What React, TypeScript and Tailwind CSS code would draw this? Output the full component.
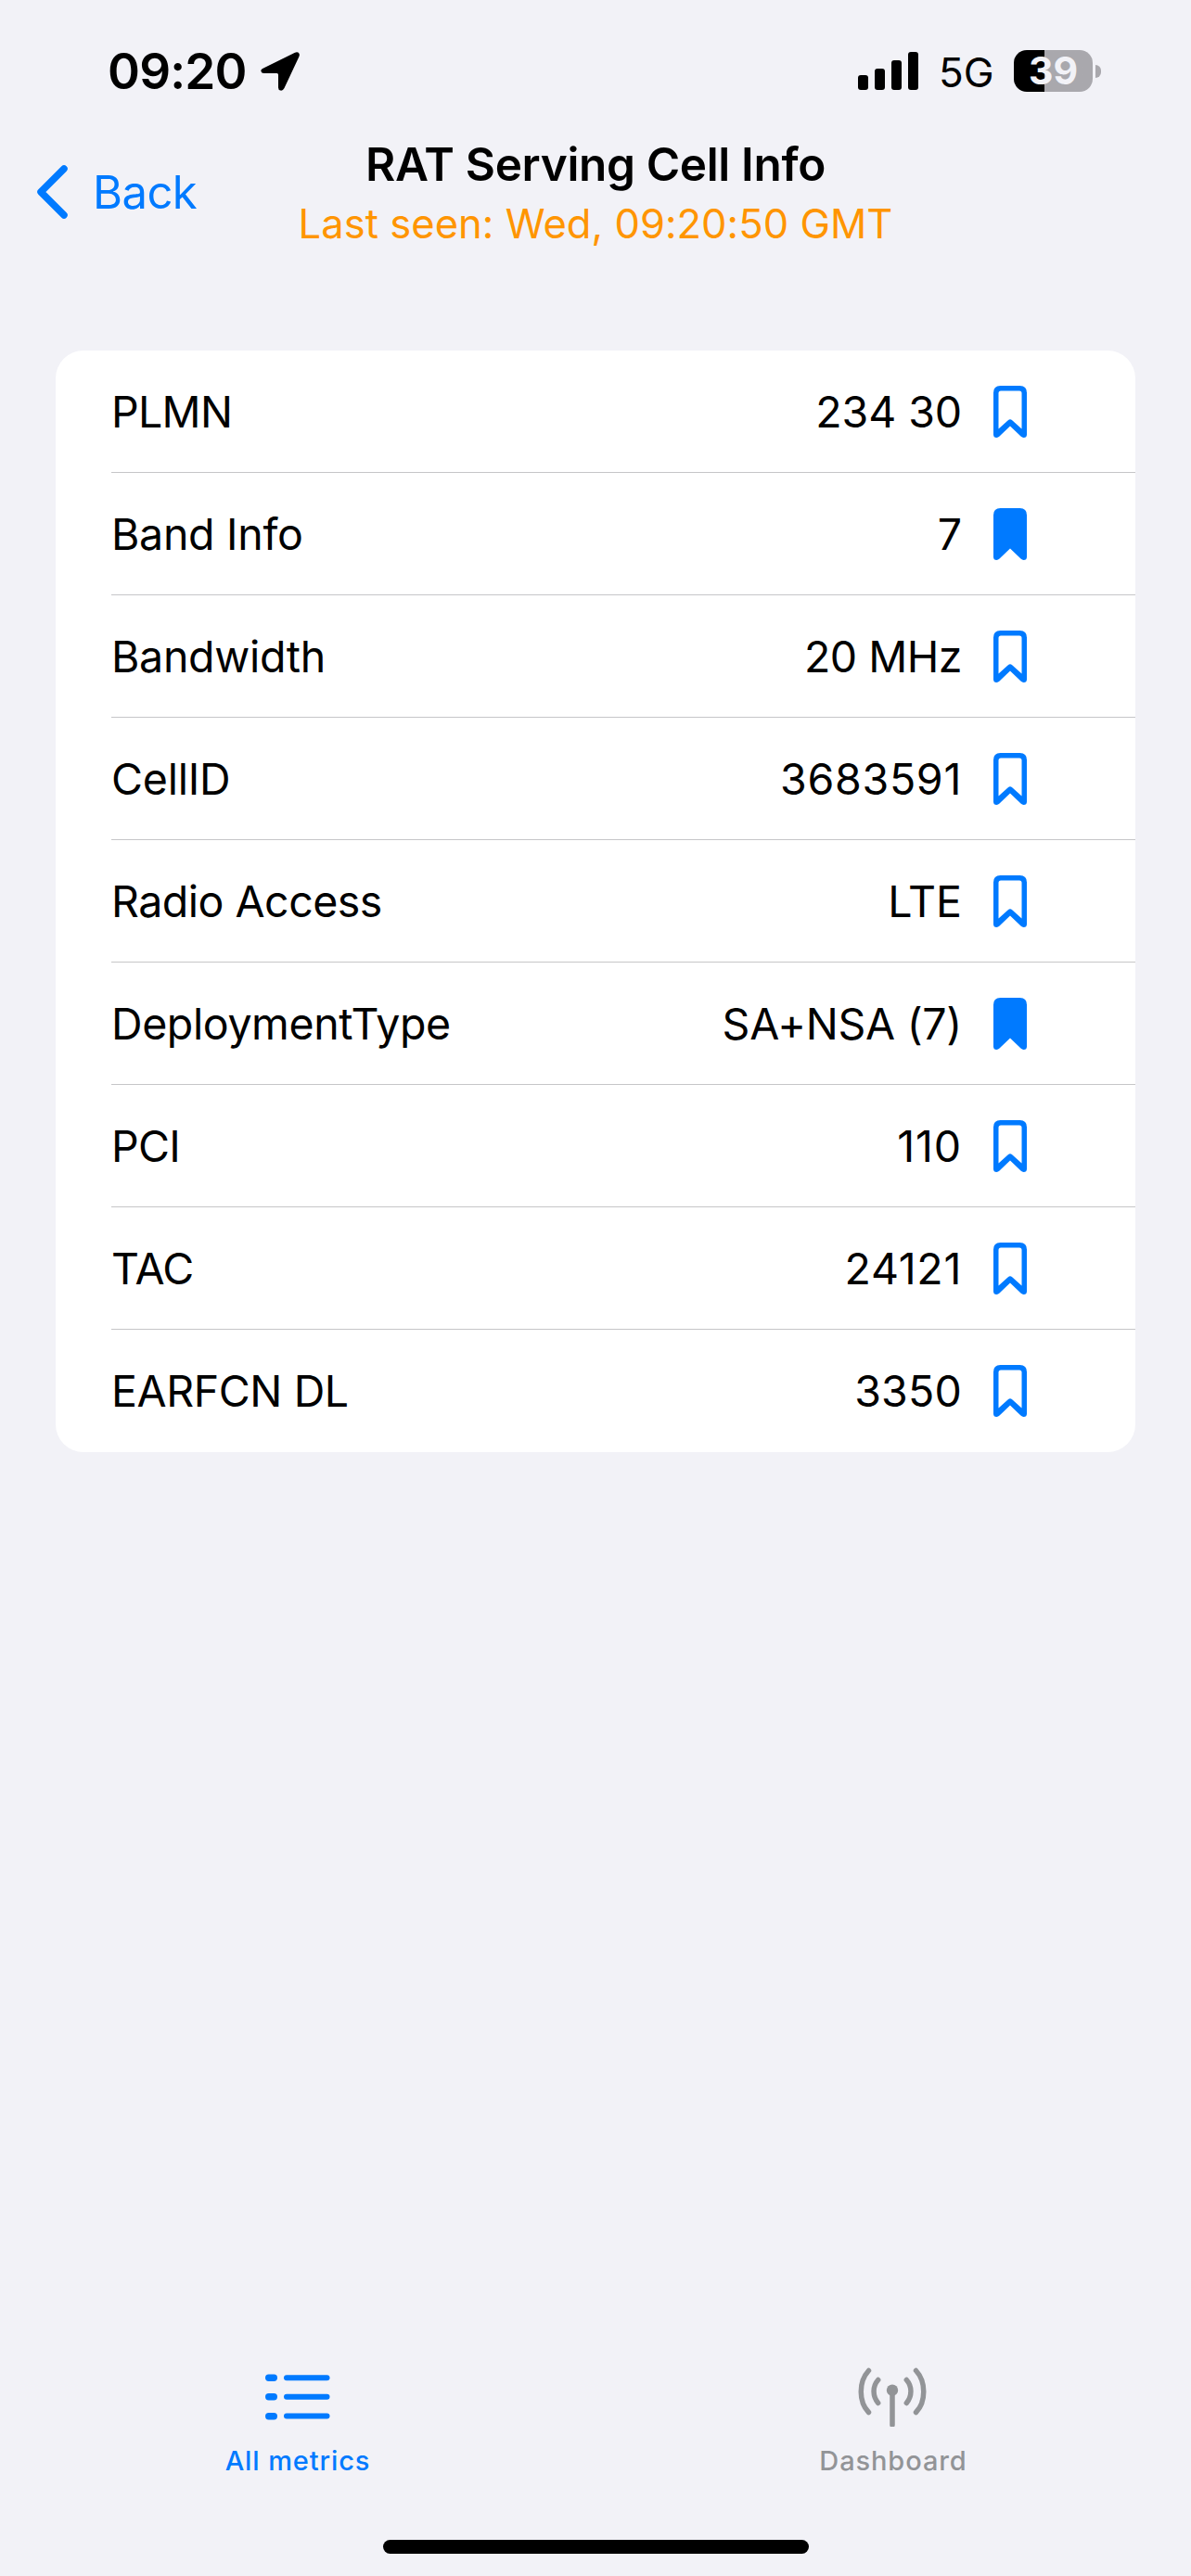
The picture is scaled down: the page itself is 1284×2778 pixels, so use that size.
import React from 'react';

type Metric = {
  label: string
  value: string
  saved: boolean
  labelSpacing: string
  valueSpacing: string
}

const metrics: Metric[] = [
  { label: 'PLMN', value: '234 30', saved: false, labelSpacing: 'tracking-[-0.7px]', valueSpacing: 'tracking-[-0.1px]' },
  { label: 'Band Info', value: '7', saved: true, labelSpacing: 'tracking-[-0.3px]', valueSpacing: '' },
  { label: 'Bandwidth', value: '20 MHz', saved: false, labelSpacing: 'tracking-[-0.3px]', valueSpacing: 'tracking-[-0.5px]' },
  { label: 'CellID', value: '3683591', saved: false, labelSpacing: 'tracking-[-0.2px]', valueSpacing: 'tracking-[0.7px]' },
  { label: 'Radio Access', value: 'LTE', saved: false, labelSpacing: 'tracking-[-0.5px]', valueSpacing: '' },
  { label: 'DeploymentType', value: 'SA+NSA (7)', saved: true, labelSpacing: 'tracking-[-0.4px]', valueSpacing: 'tracking-[-0.3px]' },
  { label: 'PCI', value: '110', saved: false, labelSpacing: 'tracking-[-0.7px]', valueSpacing: 'tracking-[0.9px]' },
  { label: 'TAC', value: '24121', saved: false, labelSpacing: 'tracking-[-0.6px]', valueSpacing: 'tracking-[0.7px]' },
  { label: 'EARFCN DL', value: '3350', saved: false, labelSpacing: 'tracking-[-0.4px]', valueSpacing: 'tracking-[0.2px]' },
];

const Bookmark = ({ saved }: { saved: boolean }) => (
  <svg viewBox="0 0 36 56" className="mt-px h-14 w-9 shrink-0 text-[#007aff]">
    {saved ? (
      <path
        fill="currentColor"
        d="M0 7.5Q0 0 7.500 0H28.500Q36 0 36 7.500V52.500Q36 56 32.500 56Q31 56 29.500 54.600L18 43.500L6.500 54.600Q5 56 3.500 56Q0 56 0 52.500Z"
      />
    ) : (
      <path
        fill="currentColor"
        fillRule="evenodd"
        d="M0 7.5Q0 0 7.500 0H28.500Q36 0 36 7.500V52.500Q36 56 32.500 56Q31 56 29.500 54.600L18 43.500L6.500 54.600Q5 56 3.500 56Q0 56 0 52.500ZM5.500 8V46.500L15.800 37.200Q18 35.300 20.200 37.200L30.500 46.500V8Q30.500 5.500 28 5.500H8Q5.500 5.500 5.500 8Z"
      />
    )}
  </svg>
);

const Row = ({ label, value, saved, labelSpacing, valueSpacing }: Metric) => (
  <li className="group h-[132px] pl-[60px]">
    <div className="flex h-full items-center border-b border-[#c6c6c8] pr-[117px] group-last:border-transparent">
      <span className={`flex-1 pt-[2px] ${labelSpacing}`}>{label}</span>
      <span className={`mr-[34px] pt-[2px] ${valueSpacing}`}>{value}</span>
      <Bookmark saved={saved} />
    </div>
  </li>
);

const StatusBar = () => (
  <div className="flex h-[153px] items-center justify-between pl-[116px] pr-[97px]">
    <div className="flex items-center gap-[15px]">
      <span className="pt-[2px] text-[53px] font-semibold leading-none tracking-[-0.8px]">09:20</span>
      <svg viewBox="0 0 42 42" className="size-[42px]">
        <path d="M3 17.500L37 .8Q40 -.5 41.500 1.800Q42.300 3.200 41.200 5.500L25.500 39Q24 42 21.500 41.600Q19 41.200 19 38.500V24.500Q19 23 17.500 23H3.500Q.8 23 .3 20.500Q0 18.800 3 17.500Z" />
      </svg>
    </div>
    <div className="flex items-center">
      <svg viewBox="0 0 65 41" className="h-[41px] w-[65px]">
        <rect x="0" y="25" width="11" height="16" rx="3" />
        <rect x="18" y="18" width="11" height="23" rx="3" />
        <rect x="36" y="9" width="11" height="32" rx="3" />
        <rect x="54" y="0" width="11" height="41" rx="3" />
      </svg>
      <span className="ml-[22px] mt-[2px] w-[59px] text-[44px] leading-none">5G</span>
      <div className="ml-[22px] flex h-[45px] w-[85px] items-center justify-center rounded-[14px] bg-linear-to-r from-black from-[39%] to-[#a9a8ad] to-[39%] text-[41px] font-bold leading-none text-[#f2f2f7]">
        39
      </div>
      <div className="ml-[3px] h-[14px] w-[6px] rounded-r-full bg-[#a9a8ad]" />
    </div>
  </div>
);

const App = () => {
  return (
    <div className="flex h-[2778px] w-[1284px] flex-col bg-[#f2f2f7] font-[Inter,sans-serif] text-black">
      <StatusBar />

      <header className="grid h-[225px] grid-cols-[320px_1fr_320px]">
        <button type="button" className="flex h-[108px] items-center gap-[27px] pl-10 text-[49px] leading-none tracking-[-0.6px] text-[#007aff]">
          <svg viewBox="0 0 33 58" className="h-[58px] w-[33px]" fill="none" stroke="currentColor" strokeWidth="7.500" strokeLinecap="round" strokeLinejoin="round">
            <path d="M29 4L4 29L29 54" />
          </svg>
          Back
        </button>
        <div className="flex flex-col items-center whitespace-nowrap">
          <h1 className="text-[49.500px] font-semibold leading-[48px] tracking-[-0.34px]">RAT Serving Cell Info</h1>
          <p className="mt-[14px] text-[43.500px] leading-[52px] tracking-[0.05px] text-[#ff9500]">Last seen: Wed, 09:20:50 GMT</p>
        </div>
      </header>

      <ul className="mx-[60px] overflow-hidden rounded-[30px] bg-white text-[46.500px] leading-none">
        {metrics.map((metric) => (
          <Row key={metric.label} {...metric} />
        ))}
      </ul>

      <nav className="mt-auto grid h-[186px] grid-cols-2 text-[29px] font-medium leading-none tracking-[0.9px]">
        <div className="flex flex-col items-center text-[#007aff]">
          <svg viewBox="0 0 70 50" className="mt-[7px] h-[50px] w-[70px]" fill="currentColor">
            <rect x="0" y=".5" width="13" height="7.500" rx="3.700" />
            <rect x="0" y="21" width="13" height="7.500" rx="3.700" />
            <rect x="0" y="42" width="13" height="7.500" rx="3.700" />
            <rect x="20" y="1.200" width="49.500" height="6" rx="3" />
            <rect x="20" y="21.800" width="49.500" height="6" rx="3" />
            <rect x="20" y="42.600" width="49.500" height="6" rx="3" />
          </svg>
          <span className="mt-[29px]">All metrics</span>
        </div>
        <div className="flex flex-col items-center text-[#929497]">
          <svg viewBox="0 0 74 64" className="mr-[2px] h-[64px] w-[74px]" fill="none" stroke="currentColor" strokeWidth="5.500" strokeLinecap="round">
            <path d="M11.500 3.500C.5 15.500 .5 37 11.500 48.500M62.500 3.500C73.500 15.500 73.500 37 62.500 48.500M21.700 13.500C15.500 20.500 15.500 31 21.700 38.500M52.300 13.500C58.500 20.500 58.500 31 52.300 38.500M37 26V62" />
            <circle cx="37" cy="24.700" r="6.200" fill="currentColor" stroke="none" />
          </svg>
          <span className="mt-[22px]">Dashboard</span>
        </div>
      </nav>

      <div className="mx-auto mb-6 h-[15px] w-[459px] rounded-full bg-black" />
    </div>
  );
};

export default App;
